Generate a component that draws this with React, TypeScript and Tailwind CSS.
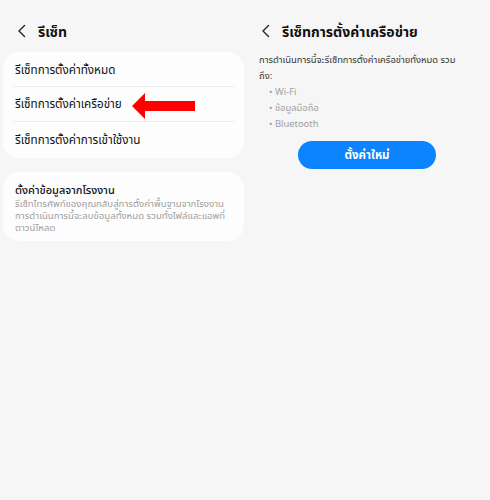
const rows = ["รีเซ็ทการตั้งค่าทั้งหมด", "รีเซ็ทการตั้งค่าเครือข่าย", "รีเซ็ทการตั้งค่าการเข้าใช้งาน"];

const bullets = ["Wi-Fi", "ข้อมูลมือถือ", "Bluetooth"];

function Chevron() {
  return (
    <svg width="9" height="14" viewBox="0 0 9 14" fill="none" className="shrink-0">
      <path d="M7.5 1.5L2 7l5.5 5.5" stroke="#222" strokeWidth="1.4" strokeLinecap="round" strokeLinejoin="round" />
    </svg>
  );
}

function RedArrow() {
  return (
    <svg width="64" height="26" viewBox="0 0 64 26" className="shrink-0">
      <polygon points="0,13 13,0 13,8 63,8 63,18 13,18 13,26" fill="#ff0000" />
    </svg>
  );
}

export default function App() {
  return (
    <div
      className="w-[490px] h-[500px] bg-[#f6f6f6] flex text-[#111]"
      style={{ fontFamily: '"Noto Sans", "Noto Sans Thai", "DejaVu Sans", sans-serif' }}
    >
      <div className="w-[245px] shrink-0 pl-[3px] pr-[1px]">
        <div className="h-[52px] flex items-center pl-[14px] pt-[10px] gap-[12px]">
          <Chevron />
          <span className="text-[14px] font-bold">รีเซ็ท</span>
        </div>
        <div className="bg-[#fdfdfd] rounded-[16px] px-[10px]">
          {rows.map((r, i) => (
            <div
              key={r}
              className={`h-[35px] flex items-center pl-[2px] ${i < rows.length - 1 ? "border-b border-[#ececec]" : ""} ${i === 0 ? "pt-[2px]" : ""}`}
            >
              <span className="text-[11.7px]">{r}</span>
              {i === 1 && (
                <span className="ml-[10px] mt-[4px] flex">
                  <RedArrow />
                </span>
              )}
            </div>
          ))}
          <div className="h-[1px]" />
        </div>
        <div className="mt-[14px] bg-[#fdfdfd] rounded-[16px] pl-[12px] pr-[6px] pt-[10px] pb-[7px]">
          <div className="text-[11px] font-medium leading-[16px]">ตั้งค่าข้อมูลจากโรงงาน</div>
          <div className="text-[9.6px] leading-[12px] text-[#a0a0a0] whitespace-nowrap">
            รีเซ็ทโทรศัพท์ของคุณกลับสู่การตั้งค่าพื้นฐานจากโรงงาน
            <br />
            การดำเนินการนี้จะลบข้อมูลทั้งหมด รวมทั้งไฟล์และแอพที่
            <br />
            ดาวน์โหลด
          </div>
        </div>
      </div>
      <div className="flex-1 pl-[14px] pr-[10px]">
        <div className="h-[52px] flex items-center pl-[2px] pt-[10px] gap-[12px]">
          <Chevron />
          <span className="text-[14px] font-bold">รีเซ็ทการตั้งค่าเครือข่าย</span>
        </div>
        <p className="text-[9.4px] leading-[16px] text-[#333]">
          การดำเนินการนี้จะรีเซ็ทการตั้งค่าเครือข่ายทั้งหมด รวม
          <br />
          ถึง:
        </p>
        <ul className="pl-[10px] text-[9.4px] leading-[16px] text-[#a0a0a0]">
          {bullets.map((b) => (
            <li key={b}>• {b}</li>
          ))}
        </ul>
        <div className="flex justify-center mt-[9px] pr-[5px]">
          <button className="w-[138px] h-[28px] rounded-full bg-[#0d84ff] text-white text-[11.5px] font-bold">
            ตั้งค่าใหม่
          </button>
        </div>
      </div>
    </div>
  );
}
